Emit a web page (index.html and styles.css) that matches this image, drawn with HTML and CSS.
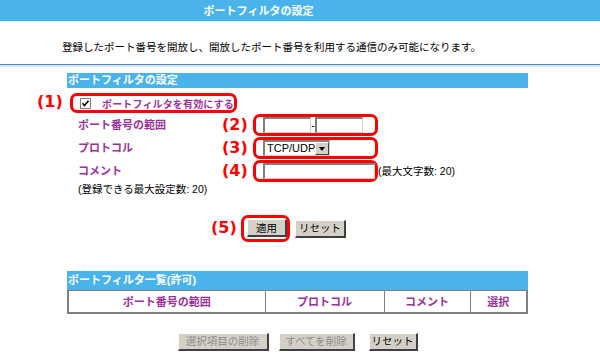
FILE: index.html
```html
<!DOCTYPE html>
<html lang="ja">
<head>
  <meta charset="UTF-8" />
  <title>ポートフィルタの設定</title>
  <link rel="stylesheet" href="styles.css">
</head>
<body>
  <div class="topbar">ポートフィルタの設定</div>
  <p class="intro">登録したポート番号を開放し、開放したポート番号を利用する通信のみ可能になります。</p>
  <div class="rule"></div>

  <div class="panel">
    <div class="section-head">ポートフィルタの設定</div>

    <div class="enable-row">
      <span class="mark mark-left">(1)</span>
      <label class="callout enable">
        <span class="check">
          <svg width="11" height="11" viewBox="0 0 11 11">
            <rect x="0.5" y="0.5" width="10" height="10" fill="#fff" stroke="#808080"/>
            <path d="M2.5 5.2 L4.5 7.5 L8.5 2.8" fill="none" stroke="#000" stroke-width="1.6"/>
          </svg>
        </span>
        <span class="field-name enable-text">ポートフィルタを有効にする</span>
      </label>
    </div>

    <div class="form-grid">
      <div class="field-name">ポート番号の範囲</div>
      <div class="field">
        <span class="mark">(2)</span>
        <div class="callout box">
          <span class="text-input short"></span><span class="dash">-</span><span class="text-input short"></span>
        </div>
      </div>

      <div class="field-name">プロトコル</div>
      <div class="field">
        <span class="mark">(3)</span>
        <div class="callout box">
          <span class="select"><span class="select-value">TCP/UDP</span><span class="select-arrow"></span></span>
        </div>
      </div>

      <div class="field-name">コメント</div>
      <div class="field">
        <span class="mark">(4)</span>
        <div class="callout box">
          <span class="text-input long"></span>
        </div>
        <span class="hint">(最大文字数: 20)</span>
      </div>
    </div>

    <p class="limit">(登録できる最大設定数: 20)</p>

    <div class="apply-row">
      <span class="mark">(5)</span>
      <div class="callout apply-box"><button class="btn apply">適用</button></div>
      <button class="btn reset-top">リセット</button>
    </div>

    <div class="section-head list-head">ポートフィルタ一覧(許可)</div>
    <table class="list">
      <tr>
        <th class="col-range">ポート番号の範囲</th>
        <th class="col-proto">プロトコル</th>
        <th class="col-comment">コメント</th>
        <th class="col-select">選択</th>
      </tr>
    </table>

    <div class="bottom-buttons">
      <button class="btn del-selected" disabled>選択項目の削除</button>
      <button class="btn del-all" disabled>すべてを削除</button>
      <button class="btn reset-bottom">リセット</button>
    </div>
  </div>
</body>
</html>
```

FILE: styles.css
```css
* {
  box-sizing: border-box;
}
body {
  margin: 0;
  font-family: 'Liberation Sans', 'Noto Sans CJK JP', sans-serif;
  font-size: 10.5px;
  color: #000;
  background: #fff;
}

.topbar {
  height: 22px;
  line-height: 22px;
  padding-right: 83px;
  background: #4ab3ec;
  color: #fff;
  font-size: 11px;
  font-weight: bold;
  text-align: center;
  border-bottom: 1px solid #d8eefb;
}

.intro {
  margin: 16px 0 0 62px;
  line-height: 18px;
  height: 18px;
}

.rule {
  margin-top: 8px;
  height: 3px;
  border-top: 1px solid #4f87b8;
  background: #d6e8f6;
}

.panel {
  margin-left: 67px;
  width: 461px;
}

.section-head {
  margin-top: 6px;
  height: 15px;
  line-height: 15px;
  padding-left: 1px;
  background: #4ab3ec;
  color: #fff;
  font-size: 11px;
  font-weight: bold;
}

.field-name {
  color: #993399;
  font-weight: bold;
  font-size: 11px;
}

.mark {
  position: absolute;
  color: #ff0000;
  font-family: 'DejaVu Sans', sans-serif;
  font-weight: bold;
  font-size: 16px;
  line-height: 20px;
}

.callout {
  border: 3px solid #ff0000;
  border-radius: 7px;
}

/* (1) */
.enable-row {
  position: relative;
  margin-top: 5px;
  height: 20px;
}
.mark-left {
  left: -30px;
  top: -1px;
}
.enable {
  display: flex;
  align-items: center;
  margin-left: 3px;
  width: 167px;
  height: 20px;
  padding-left: 7px;
  white-space: nowrap;
}
.enable-text {
  font-size: 10px;
  letter-spacing: 0.15px;
}
.check {
  display: flex;
  width: 11px;
  height: 11px;
  margin-right: 11px;
}

/* (2) - (4) */
.form-grid {
  display: grid;
  grid-template-columns: 186px 1fr;
  grid-auto-rows: 22px;
  row-gap: 1px;
  margin-top: 1px;
}
.form-grid > .field-name {
  padding-left: 11px;
  line-height: 22px;
}
.field {
  position: relative;
  display: flex;
  align-items: center;
}
.field .mark {
  left: -31px;
  top: 1px;
}
.box {
  display: flex;
  align-items: center;
  width: 125px;
  height: 22px;
  padding-left: 7px;
}
.text-input {
  display: inline-block;
  height: 16px;
  background: #fff;
  border-top: 2px solid #808080;
  border-left: 2px solid #808080;
  border-right: 1px solid #d4d0c8;
  border-bottom: 1px solid #d4d0c8;
}
.text-input.short {
  width: 48px;
}
.text-input.long {
  width: 113px;
}
.dash {
  width: 4px;
  text-align: center;
  line-height: 16px;
}
.select {
  display: inline-flex;
  align-items: center;
  height: 16px;
  width: 67px;
  border-top: 2px solid #808080;
  border-left: 2px solid #808080;
  border-right: 1px solid #d4d0c8;
  border-bottom: 1px solid #d4d0c8;
  background: #fff;
}
.select-value {
  flex: 1;
  padding-left: 2px;
  font-size: 11px;
  line-height: 13px;
}
.select-arrow {
  position: relative;
  width: 14px;
  height: 13px;
  background: #d4d0c8;
  border-top: 1px solid #fff;
  border-left: 1px solid #fff;
  border-right: 1px solid #404040;
  border-bottom: 1px solid #404040;
}
.select-arrow::after {
  content: "";
  position: absolute;
  left: 3px;
  top: 4px;
  border-left: 3.5px solid transparent;
  border-right: 3.5px solid transparent;
  border-top: 4px solid #000;
}
.hint {
  line-height: 14px;
}

.limit {
  margin: 0 0 0 11px;
  line-height: 14px;
}

/* (5) */
.apply-row {
  position: relative;
  display: flex;
  align-items: center;
  margin-top: 19px;
  padding-left: 174px;
}
.apply-row .mark {
  left: 144px;
  top: 3px;
}
.apply-box {
  width: 49px;
  height: 27px;
  padding: 1px 0 0 3px;
  margin-right: 5px;
}

.btn {
  height: 18px;
  padding: 0;
  font-family: 'Liberation Sans', 'Noto Sans CJK JP', sans-serif;
  font-size: 10.5px;
  line-height: 14px;
  color: #000;
  background: #d4d0c8;
  border-top: 1px solid #fff;
  border-left: 1px solid #fff;
  border-right: 2px solid #404040;
  border-bottom: 2px solid #404040;
  border-radius: 0;
}
.btn.apply { width: 40px; }
.btn.reset-top { width: 51px; }
.btn.del-selected { width: 91px; }
.btn.del-all { width: 76px; margin-left: 10px; }
.btn.reset-bottom { width: 49px; margin-left: 14px; }
.btn:disabled {
  color: #8c8c8c;
}

.list-head {
  margin-top: 29px;
  height: 19px;
  line-height: 19px;
}

.list {
  width: 461px;
  border-collapse: collapse;
  border: 2px solid #808080;
  border-top: 1px solid #808080;
}
.list th {
  height: 22px;
  padding: 0;
  border-left: 1px solid #808080;
  color: #993399;
  font-weight: bold;
  font-size: 11px;
  background: #fff;
}
.col-range { width: 197px; }
.col-proto { width: 119px; }
.col-comment { width: 86px; }

.bottom-buttons {
  display: flex;
  justify-content: center;
  margin-top: 19px;
}
```
